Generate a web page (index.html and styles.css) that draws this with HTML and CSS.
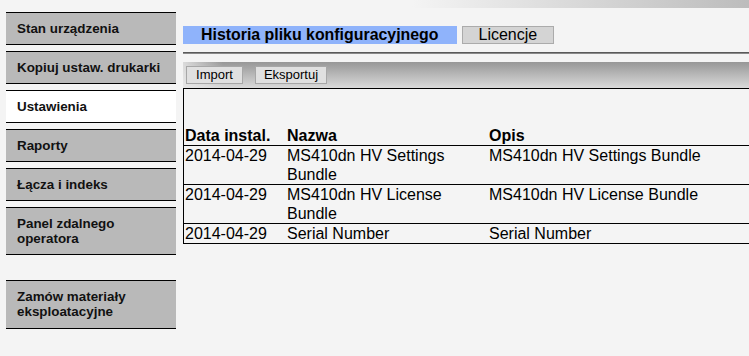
FILE: index.html
```html
<!DOCTYPE html>
<html>
<head>
    <title>Historia pliku konfiguracyjnego</title>
    <link rel="stylesheet" href="styles.css">
</head>
<body>
    <div class="page">
        <ul class="sidebar">
            <li class="nav-item">Stan urządzenia</li>
            <li class="nav-item">Kopiuj ustaw. drukarki</li>
            <li class="nav-item active">Ustawienia</li>
            <li class="nav-item">Raporty</li>
            <li class="nav-item">Łącza i indeks</li>
            <li class="nav-item">Panel zdalnego<br>operatora</li>
            <li class="nav-item nav-extra">Zamów materiały<br>eksploatacyjne</li>
        </ul>

        <div class="main">
            <div class="tabs">
                <span class="tab tab-active">Historia pliku konfiguracyjnego</span>
                <span class="tab">Licencje</span>
            </div>
            <div class="divider"></div>

            <div class="toolbar">
                <button class="tool-btn btn-import">Import</button>
                <button class="tool-btn btn-export">Eksportuj</button>
            </div>

            <table class="history">
                <tr>
                    <th class="col-date">Data instal.</th>
                    <th class="col-name">Nazwa</th>
                    <th>Opis</th>
                </tr>
                <tr>
                    <td>2014-04-29</td>
                    <td>MS410dn HV Settings Bundle</td>
                    <td>MS410dn HV Settings Bundle</td>
                </tr>
                <tr>
                    <td>2014-04-29</td>
                    <td>MS410dn HV License Bundle</td>
                    <td>MS410dn HV License Bundle</td>
                </tr>
                <tr>
                    <td>2014-04-29</td>
                    <td>Serial Number</td>
                    <td>Serial Number</td>
                </tr>
            </table>
        </div>
    </div>
</body>
</html>
```

FILE: styles.css
```css
body {
    margin: 0;
    font-family: "Liberation Sans", Arial, sans-serif;
    color: #000;
    background: linear-gradient(to right, #f4f4f4 55%, #bcbcbc) no-repeat top left / 100% 8px, #f4f4f4;
    overflow: hidden;
}

.page {
    display: flex;
    align-items: flex-start;
}

.sidebar {
    list-style: none;
    margin: 12px 0 0 6px;
    padding: 0;
    width: 170px;
    flex-shrink: 0;
}

.nav-item {
    background-color: #b9b9b9;
    border-top: 1px solid #000;
    border-bottom: 1px solid #000;
    padding: 8px 0 8px 11px;
    margin-bottom: 6px;
    font-size: 13.4px;
    font-weight: bold;
    line-height: 15px;
    color: #111;
}

.nav-item.active {
    background-color: #fff;
}

.nav-extra {
    margin-top: 25px;
    padding-bottom: 9px;
}

.main {
    flex: 1;
    margin-left: 7px;
    padding-top: 26px;
}

.tabs {
    display: flex;
    gap: 5px;
}

.tab {
    display: block;
    height: 16px;
    line-height: 16px;
    padding: 0 16px;
    font-size: 16px;
    background-color: #d4d4d4;
    border: 1px solid #ababab;
}

.tab-active {
    background-color: #8fb3fb;
    border-color: #8fb3fb;
    font-weight: bold;
    padding: 0 17px;
    font-size: 15.9px;
}

.divider {
    margin-top: 8px;
    height: 1px;
    border-top: 1px solid #5a5a5a;
    background-color: #8a8a8a;
}

.toolbar {
    margin-top: 8px;
    height: 26px;
    box-sizing: border-box;
    padding: 4px 0 0 3px;
    display: flex;
    gap: 12px;
    align-items: flex-start;
    background:
        linear-gradient(to right, rgba(235, 235, 235, 0.8), rgba(235, 235, 235, 0) 40px),
        linear-gradient(to bottom, #979797, #dadada);
}

.tool-btn {
    height: 18px;
    padding: 0;
    font-family: "Liberation Sans", Arial, sans-serif;
    font-size: 13px;
    line-height: 16px;
    color: #000;
    background-color: #e0e0e0;
    border: 1px solid #a7a7a7;
    border-radius: 0;
}

.btn-import {
    width: 57px;
}

.btn-export {
    width: 72px;
}

.history {
    width: 100%;
    border-collapse: collapse;
    border-top: 1px solid #000;
    border-left: 1px solid #000;
    font-size: 16px;
    line-height: 19px;
}

.history tr {
    border-bottom: 1px solid #000;
}

.history th,
.history td {
    padding: 0 0 0 1px;
    text-align: left;
    vertical-align: top;
}

.history th {
    height: 56px;
    vertical-align: bottom;
}

.col-date {
    width: 101px;
}

.col-name {
    width: 201px;
}
```
